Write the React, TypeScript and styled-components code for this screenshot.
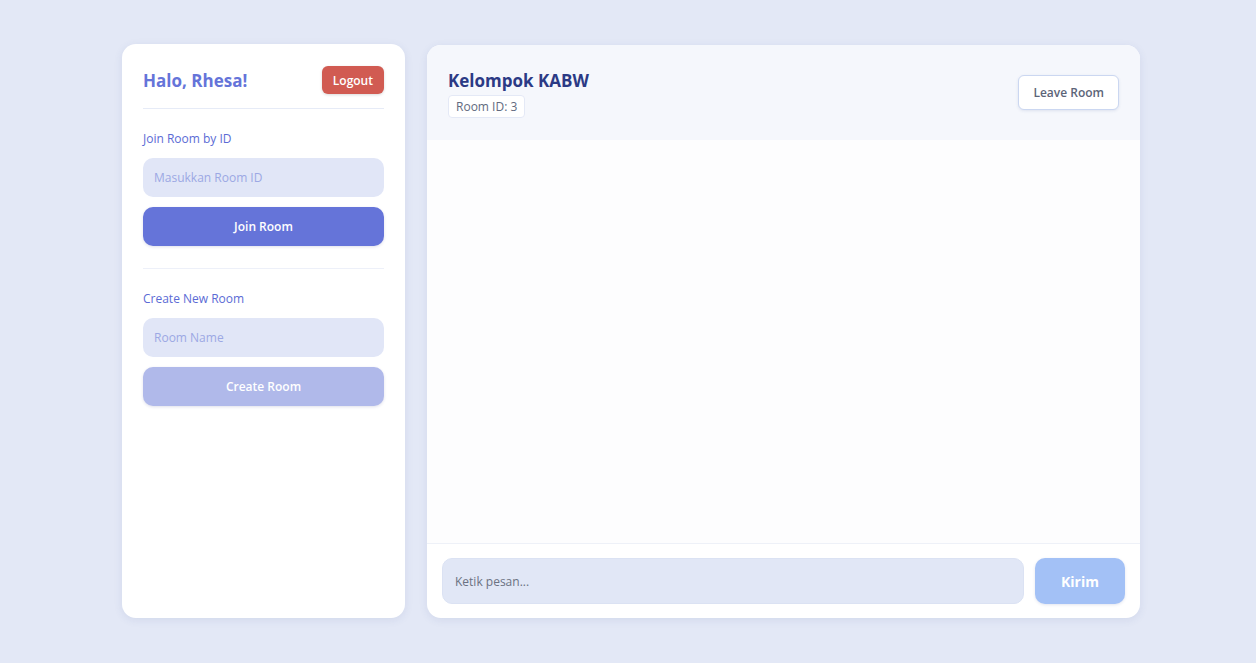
import React from 'react';
import styled, { createGlobalStyle } from 'styled-components';

const COLORS = {
  page: '#e3e8f6',
  primary: '#6574d9',
  primaryLight: '#b0b9ea',
  label: '#5b6bd5',
  field: '#e1e6f7',
  placeholder: '#9ca8e4',
  danger: '#d15b52',
  navy: '#2b3a85',
  send: '#a3c1f6',
};

const GlobalStyle = createGlobalStyle`
  * { box-sizing: border-box; }
  body {
    margin: 0;
    background: ${COLORS.page};
    font-family: 'Open Sans', 'Noto Sans', sans-serif;
  }
`;

const Page = styled.div`
  display: flex;
  gap: 22px;
  padding: 44px 116px 45px 122px;
  height: 663px;
`;

const Card = styled.section`
  background: #ffffff;
  border-radius: 14px;
  box-shadow: 0 2px 8px rgba(60, 80, 150, 0.1);
  overflow: hidden;
`;

const Sidebar = styled(Card)`
  width: 283px;
  flex-shrink: 0;
  padding: 22px 21px;
  display: flex;
  flex-direction: column;
`;

const SideHeader = styled.div`
  display: flex;
  align-items: center;
  justify-content: space-between;
  padding-bottom: 14px;
  border-bottom: 1px solid #e6ebf7;
`;

const Greeting = styled.h2`
  margin: 0;
  font-size: 17px;
  font-weight: 700;
  color: ${COLORS.primary};
`;

const SmallButton = styled.button`
  height: 28px;
  padding: 0 11px;
  border: none;
  border-radius: 6px;
  background: ${COLORS.danger};
  color: #fff;
  font-family: inherit;
  font-size: 12px;
  font-weight: 600;
  box-shadow: 0 1px 3px rgba(0, 0, 0, 0.15);
`;

const Section = styled.div<{ $divider?: boolean }>`
  display: flex;
  flex-direction: column;
  gap: 10px;
  padding: ${(p) => (p.$divider ? '22px 0 22px' : '22px 0 0')};
  border-bottom: ${(p) => (p.$divider ? '1px solid #edf0f9' : 'none')};
`;

const Label = styled.div`
  font-size: 12px;
  font-weight: 500;
  color: ${COLORS.label};
  line-height: 16px;
  margin-bottom: 1px;
`;

const Field = styled.input`
  height: 39px;
  width: 100%;
  border: none;
  border-radius: 10px;
  background: ${COLORS.field};
  padding: 0 11px;
  font-family: inherit;
  font-size: 12px;
  outline: none;
  &::placeholder {
    color: ${COLORS.placeholder};
  }
`;

const WideButton = styled.button<{ $muted?: boolean }>`
  height: 39px;
  width: 100%;
  border: none;
  border-radius: 10px;
  background: ${(p) => (p.$muted ? COLORS.primaryLight : COLORS.primary)};
  color: #fff;
  font-family: inherit;
  font-size: 12px;
  font-weight: 600;
  box-shadow: 0 1px 3px rgba(40, 50, 120, 0.15);
`;

const ChatCard = styled(Card)`
  flex: 1;
  display: flex;
  flex-direction: column;
  margin-top: 1px;
`;

const ChatHeader = styled.header`
  height: 95px;
  background: #f5f7fc;
  display: flex;
  align-items: center;
  justify-content: space-between;
  padding: 0 21px;
`;

const TitleBlock = styled.div`
  display: flex;
  flex-direction: column;
  align-items: flex-start;
  gap: 3px;
  margin-top: 1px;
`;

const RoomTitle = styled.h1`
  margin: 0;
  font-size: 17px;
  font-weight: 700;
  color: ${COLORS.navy};
`;

const Badge = styled.span`
  background: #fff;
  border: 1px solid #e4e9f6;
  border-radius: 4px;
  padding: 2px 7px;
  font-size: 12px;
  color: #626a7e;
`;

const OutlineButton = styled.button`
  height: 35px;
  padding: 0 14px;
  background: #fff;
  border: 1px solid #cbd7f1;
  border-radius: 6px;
  font-family: inherit;
  font-size: 12px;
  font-weight: 600;
  color: #5c6478;
  box-shadow: 0 1px 3px rgba(60, 80, 150, 0.12);
`;

const Messages = styled.div`
  flex: 1;
  background: #fdfdfe;
  border-bottom: 1px solid #eef1f8;
`;

const Composer = styled.footer`
  display: flex;
  gap: 11px;
  padding: 14px 15px 14px 15px;
`;

const MessageInput = styled.input`
  flex: 1;
  height: 46px;
  border: 1px solid #dbe2f3;
  border-radius: 10px;
  background: #e1e7f6;
  padding: 0 12px;
  font-family: inherit;
  font-size: 12px;
  outline: none;
  &::placeholder {
    color: #6b7282;
  }
`;

const SendButton = styled.button`
  width: 90px;
  height: 46px;
  border: none;
  border-radius: 10px;
  background: ${COLORS.send};
  color: #fff;
  font-family: inherit;
  font-size: 14px;
  font-weight: 700;
  box-shadow: 0 1px 3px rgba(60, 80, 150, 0.15);
`;

const App: React.FC = () => {
  return (
    <>
      <GlobalStyle />
      <Page>
        <Sidebar>
          <SideHeader>
            <Greeting>Halo, Rhesa!</Greeting>
            <SmallButton>Logout</SmallButton>
          </SideHeader>
          <Section $divider>
            <Label>Join Room by ID</Label>
            <Field placeholder="Masukkan Room ID" />
            <WideButton>Join Room</WideButton>
          </Section>
          <Section>
            <Label>Create New Room</Label>
            <Field placeholder="Room Name" />
            <WideButton $muted>Create Room</WideButton>
          </Section>
        </Sidebar>
        <ChatCard>
          <ChatHeader>
            <TitleBlock>
              <RoomTitle>Kelompok KABW</RoomTitle>
              <Badge>Room ID: 3</Badge>
            </TitleBlock>
            <OutlineButton>Leave Room</OutlineButton>
          </ChatHeader>
          <Messages />
          <Composer>
            <MessageInput placeholder="Ketik pesan..." />
            <SendButton>Kirim</SendButton>
          </Composer>
        </ChatCard>
      </Page>
    </>
  );
};

export default App;
